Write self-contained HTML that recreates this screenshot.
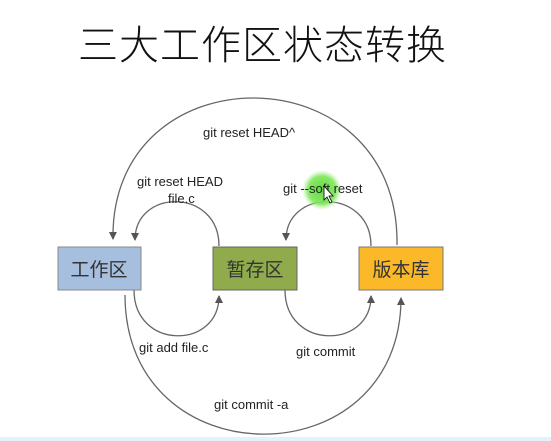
<!DOCTYPE html>
<html><head><meta charset="utf-8"><style>
html,body{margin:0;padding:0;background:#fff;width:551px;height:441px;overflow:hidden}
svg{display:block}
</style></head><body>
<svg width="551" height="441" viewBox="0 0 551 441" xmlns="http://www.w3.org/2000/svg">
<defs>
<marker id="a" markerWidth="8" markerHeight="8" refX="7" refY="4" orient="auto" markerUnits="userSpaceOnUse" viewBox="0 0 8 8">
<path d="M0,0 L8,4 L0,8 Z" fill="#555"/></marker>
<radialGradient id="g"><stop offset="0" stop-color="#5edc3a"/><stop offset="0.7" stop-color="#7ee65a" stop-opacity="0.9"/><stop offset="1" stop-color="#aef090" stop-opacity="0"/></radialGradient>
</defs>
<rect x="0" y="437" width="551" height="4" fill="#e4f1f8"/>
<text x="262" y="59" font-family="'Noto Sans CJK SC',sans-serif" font-weight="300" font-size="40" text-anchor="middle" fill="#111" textLength="368" lengthAdjust="spacing">三大工作区状态转换</text>
<g fill="none" stroke="#666" stroke-width="1.3">
<path d="M397,245 C400,50 110,50 113,239" marker-end="url(#a)"/>
<path d="M125,295 C125,480 401,480 401,298" marker-end="url(#a)"/>
<path d="M219,246 C219,188 135,188 135,240" marker-end="url(#a)"/>
<path d="M134,290 C134,350 219,350 219,296" marker-end="url(#a)"/>
<path d="M371,246 C371,188 286,188 286,240" marker-end="url(#a)"/>
<path d="M285,290 C285,350 371,350 371,296" marker-end="url(#a)"/>
</g>
<rect x="58" y="247" width="83" height="43" fill="#a6bfdf" stroke="#888" stroke-width="1"/>
<rect x="213" y="247" width="84" height="43" fill="#8fab4c" stroke="#666" stroke-width="1"/>
<rect x="359" y="247" width="84" height="43" fill="#fbb929" stroke="#777" stroke-width="1"/>
<g font-family="'Liberation Sans','Noto Sans CJK SC',sans-serif" font-size="19" fill="#333" text-anchor="middle">
<text x="99" y="276">工作区</text>
<text x="255" y="276">暂存区</text>
<text x="401" y="276">版本库</text>
</g>
<circle cx="322" cy="190" r="20" fill="url(#g)"/>
<g font-family="'Liberation Sans',sans-serif" font-size="13" fill="#222">
<text x="203" y="137">git reset  HEAD^</text>
<text x="137" y="186">git reset HEAD</text>
<text x="168" y="203">file.c</text>
<text x="283" y="193">git --soft reset</text>
<text x="139" y="352">git add file.c</text>
<text x="296" y="356">git commit</text>
<text x="214" y="409">git commit -a</text>
</g>
<path d="M324,186 L324,200 L327,197 L330,203 L332,202 L329,196 L333,196 Z" fill="#fff" stroke="#000" stroke-width="0.8"/>
</svg>
</body></html>
